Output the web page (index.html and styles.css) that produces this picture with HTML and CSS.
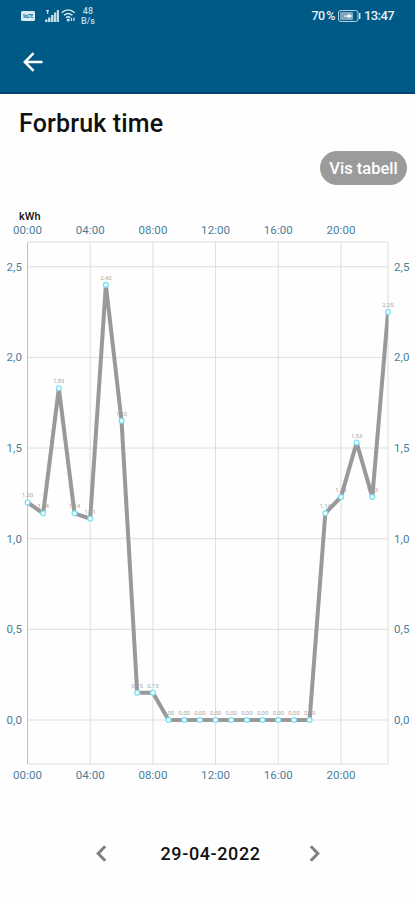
FILE: index.html
```html
<!DOCTYPE html>
<html lang="no">
<head>
    <meta charset="UTF-8">
    <meta name="viewport" content="width=device-width, initial-scale=1.0">
    <title>Forbruk time</title>
    <link rel="stylesheet" href="styles.css">
</head>
<body>
    <header>
        <div class="status-bar">
            <div class="status-left">
                <svg class="volte" width="14" height="10" viewBox="0 0 14 10">
                    <rect width="14" height="10" rx="1.5" fill="#dcebf2"/>
                    <text x="2" y="6.800" textLength="10" lengthAdjust="spacingAndGlyphs">VoLTE</text>
                </svg>
                <svg class="signal" width="14" height="14" viewBox="0 0 14 14" fill="#c3dae5">
                    <path d="M0 10.500h2.500V13H0zM3 8.500h2.500V13H3zM6 6h2.500v7H6zM9 3.500h2.300V13H9zM11.800 1H14v12h-2.200z"/>
                    <path d="M1 1h3v1.200H1zM2 2h1.300v3H2z"/>
                </svg>
                <svg class="wifi" width="15" height="13" viewBox="0 0 15 13" fill="none" stroke="#d3e5ee" stroke-width="1.500">
                    <path d="M.7 3.700c4-3.600 9-3.600 13 0M3 6.300c2.600-2.300 5.800-2.300 8.400 0M5 8.700c1.400-1.200 3-1.200 4.400 0"/>
                    <circle cx="7.200" cy="11" r=".8"/>
                    <path d="M10.500 9v3M13 8.500v3.500" stroke-width="1.200"/>
                </svg>
                <div class="speed"><span>48</span><span>B/s</span></div>
            </div>
            <div class="status-right">
                <span class="percent">70 %</span>
                <svg width="23" height="12" viewBox="0 0 23 12">
                    <rect x=".5" y=".5" width="19.500" height="11" rx="2.500" fill="none" stroke="#b9d2df"/>
                    <rect x="2" y="2" width="13" height="8" rx="1" fill="#7ba8bf"/>
                    <path d="M21.700 3v6" stroke="#d3e5ee" stroke-width="1.500"/>
                    <path d="M6.500 5.500h3.500V3.700L14.500 6 10 8.300V6.800H6.500z" fill="#fff"/>
                </svg>
                <span class="clock">13:47</span>
            </div>
        </div>
        <a href="#" class="back" aria-label="Tilbake">
            <svg width="20" height="20" viewBox="0 0 20 20" fill="none" stroke="#fff" stroke-width="2.500">
                <path d="M19.500 10H2M10.600 1.200L1.800 10l8.800 8.800"/>
            </svg>
        </a>
    </header>

    <main>
        <h1>Forbruk time</h1>
        <button type="button" class="table-button">Vis tabell</button>

        <svg class="chart" id="chart" width="415" height="590" viewBox="0 0 415 590">
            <clipPath id="plot"><rect x="27" y="37" width="361.500" height="523"/></clipPath>
            <text class="unit" x="19" y="15">kWh</text>
        </svg>

        <div class="date-picker">
            <svg width="11" height="17" viewBox="0 0 11 17"><path d="M9.200 1.200L2.200 8.500l7 7.300"/></svg>
            <span>29-04-2022</span>
            <svg width="11" height="17" viewBox="0 0 11 17"><path d="M1.800 1.200l7 7.300-7 7.300"/></svg>
        </div>
    </main>

    <script src="chart.js"></script>
</body>
</html>
```
FILE: styles.css
```css
* {
    box-sizing: border-box;
}

body {
    margin: 0;
    background-color: #fefefe;
    font-family: Roboto, sans-serif;
    color: #111;
}

/* Top bar */
header {
    height: 94px;
    background-color: #005a87;
    border-bottom: 2px solid #004474;
}

.status-bar {
    display: flex;
    justify-content: space-between;
    height: 31px;
    padding: 0 21px;
    color: #e6f1f6;
}

.status-left,
.status-right {
    display: flex;
    align-items: center;
}

.volte text {
    font-size: 4.5px;
    font-weight: bold;
    fill: #005a87;
}

.signal {
    margin-left: 10px;
}

.wifi {
    margin-left: 2px;
}

.speed {
    display: flex;
    flex-direction: column;
    align-items: center;
    margin-left: 5px;
    font-size: 9px;
    font-weight: 500;
    line-height: 10px;
    color: #c3dae5;
}

.status-right {
    font-size: 13px;
    font-weight: 500;
}

.percent {
    margin-right: 3px;
    font-size: 12.5px;
    letter-spacing: -0.5px;
    word-spacing: -1px;
}

.clock {
    margin-left: 3px;
    letter-spacing: -0.6px;
}

.back {
    display: block;
    width: 20px;
    height: 20px;
    margin: 21px 0 0 23px;
}

.back svg {
    display: block;
}

/* Content */
main {
    display: flex;
    flex-direction: column;
}

h1 {
    margin: 14px 0 0 19px;
    font-size: 25px;
    font-weight: 500;
    line-height: 32px;
    letter-spacing: 0.15px;
}

.table-button {
    align-self: flex-end;
    width: 87px;
    height: 34px;
    margin: 11px 8px 0 0;
    padding: 0;
    border: none;
    border-radius: 17px;
    background-color: #9b9b9b;
    color: #fff;
    font-family: inherit;
    font-size: 16.5px;
    font-weight: 500;
}

/* Chart */
.chart {
    display: block;
    margin-top: 20px;
}

.unit {
    font-size: 11px;
    font-weight: 500;
    fill: #111;
}

.axis-label {
    font-size: 11.5px;
    fill: #4a7f99;
}

.grid {
    stroke: #dedede;
    stroke-width: 1;
}

.axis {
    stroke: #c0c0c0;
    stroke-width: 1;
}

.line {
    fill: none;
    stroke: #999;
    stroke-width: 4;
    stroke-linejoin: bevel;
}

.point {
    fill: #fff;
    stroke: #78e2f2;
    stroke-width: 1.3;
}

.value {
    font-size: 6px;
    fill: #aaa;
    text-anchor: middle;
}

/* Date */
.date-picker {
    display: flex;
    justify-content: center;
    align-items: center;
    height: 24px;
    margin-top: 46px;
}

.date-picker span {
    width: 100px;
    margin: 0 48px 0 54px;
    font-size: 18px;
    font-weight: 500;
    letter-spacing: 0.6px;
    white-space: nowrap;
}

.date-picker path {
    fill: none;
    stroke: #808080;
    stroke-width: 3;
}
```
FILE: chart.js
```js
const chart = document.getElementById('chart');

// kWh per hour, starting at 00:00
const usage = [1.2, 1.14, 1.83, 1.14, 1.11, 2.4, 1.65, 0.15, 0.15, 0, 0, 0,
    0, 0, 0, 0, 0, 0, 0, 1.14, 1.23, 1.53, 1.23, 2.25];

const left = 27.5;
const right = 388;
const top_ = 37;
const bottom = 559;
const zero = 515;

function x(hour) {
    return left + hour * (right - left) / 23;
}

function y(kwh) {
    return zero - kwh * 181.3;
}

function add(name, attrs, text) {
    const el = document.createElementNS('http://www.w3.org/2000/svg', name);
    for (const key in attrs) {
        el.setAttribute(key, attrs[key]);
    }
    if (text) {
        el.textContent = text;
    }
    chart.appendChild(el);
}

function format(value, digits) {
    return value.toFixed(digits).replace('.', ',');
}

// Hours along the top and bottom
for (let hour = 0; hour <= 20; hour += 4) {
    const label = String(hour).padStart(2, '0') + ':00';
    add('line', { class: 'grid', x1: x(hour), x2: x(hour), y1: top_, y2: bottom });
    add('text', { class: 'axis-label', x: x(hour) - 14.5, y: 29, textLength: 29 }, label);
    add('text', { class: 'axis-label', x: x(hour) - 14.5, y: 574, textLength: 29 }, label);
}

// kWh on both sides
for (let kwh = 0; kwh <= 2.5; kwh += 0.5) {
    add('line', { class: 'grid', x1: left, x2: right, y1: y(kwh), y2: y(kwh) });
    add('text', { class: 'axis-label', x: 6.5, y: y(kwh) + 4, textLength: 15.5 }, format(kwh, 1));
    add('text', { class: 'axis-label', x: 394, y: y(kwh) + 4, textLength: 15.5 }, format(kwh, 1));
}

add('path', { class: 'grid', fill: 'none', d: `M${left} ${top_}H${right}V${bottom}H${left}` });
add('line', { class: 'axis', x1: left, x2: left, y1: top_, y2: bottom });

usage.forEach((value, hour) => {
    add('text', { class: 'value', x: x(hour), y: y(value) - 5 }, format(value, 2));
});

add('polyline', {
    class: 'line',
    'clip-path': 'url(#plot)',
    points: usage.map((value, hour) => x(hour) + ',' + y(value)).join(' ')
});

usage.forEach((value, hour) => {
    add('circle', { class: 'point', cx: x(hour), cy: y(value), r: 2.4 });
});
```
